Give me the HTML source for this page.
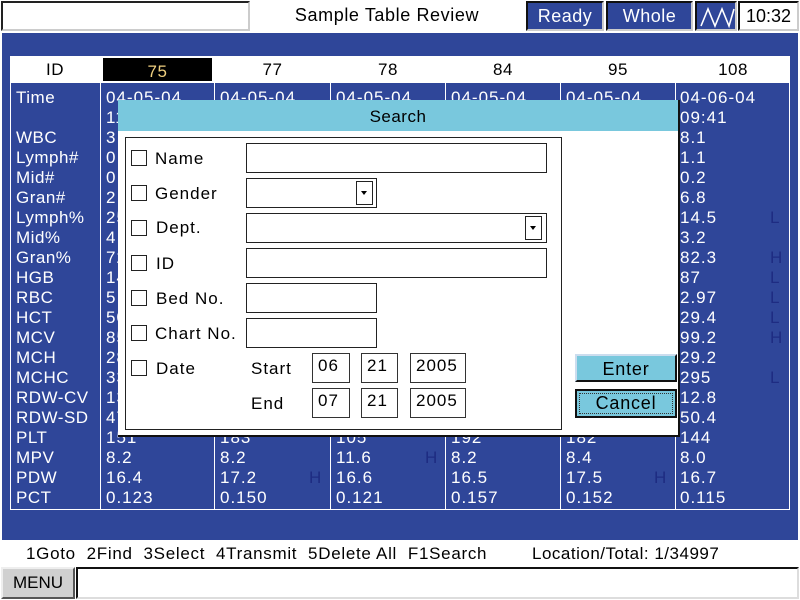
<!DOCTYPE html>
<html><head><meta charset="utf-8"><style>
*{margin:0;padding:0;box-sizing:border-box}
body{width:800px;height:600px;background:#fff;position:relative;overflow:hidden;font-family:"Liberation Sans",sans-serif;font-size:17px;color:#000}
.a{position:absolute}
.blue{background:#2f4699}
.col{position:absolute;top:88px;line-height:20px;color:#fff;font-size:17px;white-space:pre;letter-spacing:1px}
.flag{position:absolute;color:#1e2c82;font-size:17px;line-height:20px}
.vl{position:absolute;top:56px;width:1px;height:454px;background:#fff}
.hd{position:absolute;top:56px;height:27px;background:#fff;text-align:center;line-height:28px;font-size:17px;letter-spacing:0.5px}
.dlg{position:absolute;left:118px;top:100px;width:562px;height:337px;background:#fff;border-right:2px solid #111;border-bottom:2px solid #111}
.cb{position:absolute;width:16px;height:16px;border:1.5px solid #222;background:#fff}
.lb{position:absolute;font-size:17px;line-height:20px;letter-spacing:1px}
.in{position:absolute;border:1.5px solid #222;background:#fff}
.dd{position:absolute;width:17px;height:24px;border:1.5px solid #222;background:#fff}
.dd:after{content:"";position:absolute;left:4px;top:9px;border-left:3px solid transparent;border-right:3px solid transparent;border-top:4px solid #000}
.db{position:absolute;border:1.5px solid #333;background:#fff;font-size:17px;padding-left:5px;line-height:24px;letter-spacing:1px}
</style></head><body>
<div class="a" style="left:1px;top:1px;width:249px;height:30px;border:2px solid #222;border-right-color:#ccc;border-bottom-color:#ccc;background:#fff"></div>
<div class="a" style="left:250px;top:5px;width:274px;text-align:center;font-size:18px;letter-spacing:0.6px">Sample Table Review</div>
<div class="a blue" style="left:526px;top:1px;width:78px;height:30px;border:2px solid #111;border-right-color:#ccc;border-bottom-color:#ccc;color:#fff;text-align:center;line-height:26px;font-size:18px;letter-spacing:0.5px">Ready</div>
<div class="a blue" style="left:606px;top:1px;width:87px;height:30px;border:2px solid #111;border-right-color:#ccc;border-bottom-color:#ccc;color:#fff;text-align:center;line-height:26px;font-size:18px;letter-spacing:0.5px">Whole</div>
<div class="a blue" style="left:695px;top:1px;width:42px;height:30px;border:2px solid #111;border-right-color:#ccc;border-bottom-color:#ccc">
<svg width="38" height="26" style="position:absolute;left:1px;top:1px"><path d="M3 22 L10 5 L17 22 L24 5 L31 22 L36 5" fill="none" stroke="#fff" stroke-width="1.6"/></svg></div>
<div class="a" style="left:738px;top:1px;width:61px;height:30px;border:2px solid #111;border-right-color:#ccc;border-bottom-color:#ccc;background:#fff;text-align:center;line-height:27px;font-size:18px">10:32</div>
<div class="a blue" style="left:2px;top:33px;width:796px;height:507px"></div>
<div class="a" style="left:10px;top:56px;width:780px;height:454px;border:1px solid #fff"></div>
<div class="hd" style="left:10px;width:90px">ID</div>
<div class="hd" style="left:101px;width:113px;background:#000;color:#f0d080;border:2px solid #fff">75</div>
<div class="hd" style="left:215px;width:115px">77</div>
<div class="hd" style="left:331px;width:114px">78</div>
<div class="hd" style="left:446px;width:114px">84</div>
<div class="hd" style="left:561px;width:114px">95</div>
<div class="hd" style="left:676px;width:114px">108</div>
<div class="vl" style="left:100px"></div><div class="vl" style="left:214px"></div><div class="vl" style="left:330px"></div><div class="vl" style="left:445px"></div><div class="vl" style="left:560px"></div><div class="vl" style="left:675px"></div>
<div class="col" style="left:16px;letter-spacing:0.5px">Time

WBC
Lymph#
Mid#
Gran#
Lymph%
Mid%
Gran%
HGB
RBC
HCT
MCV
MCH
MCHC
RDW-CV
RDW-SD
PLT
MPV
PDW
PCT</div>
<div class="col" style="left:106px">04-05-04
11:20
3.5
0.9
0.3
2.3
25.1
4.2
72.7
140
5.01
50.2
85.1
28.0
330
13.2
47.2
151
8.2
16.4
0.123</div>
<div class="col" style="left:220px">04-05-04
11:22
5.1
1.2
0.4
3.5
20.1
6.2
70.1
135
4.50
44.0
90.0
30.0
310
12.5
48.0
183
8.2
17.2
0.150</div>
<div class="col" style="left:336px">04-05-04
















105
11.6
16.6
0.121</div>
<div class="col" style="left:451px">04-05-04
















192
8.2
16.5
0.157</div>
<div class="col" style="left:566px">04-05-04
















182
8.4
17.5
0.152</div>
<div class="col" style="left:680px">04-06-04
09:41
8.1
1.1
0.2
6.8
14.5
3.2
82.3
87
2.97
29.4
99.2
29.2
295
12.8
50.4
144
8.0
16.7
0.115</div>
<div class="flag" style="left:309px;top:468px">H</div>
<div class="flag" style="left:425px;top:448px">H</div>
<div class="flag" style="left:654px;top:468px">H</div>
<div class="flag" style="left:770px;top:208px">L</div>
<div class="flag" style="left:770px;top:248px">H</div>
<div class="flag" style="left:770px;top:268px">L</div>
<div class="flag" style="left:770px;top:288px">L</div>
<div class="flag" style="left:770px;top:308px">L</div>
<div class="flag" style="left:770px;top:328px">H</div>
<div class="flag" style="left:770px;top:368px">L</div>
<div class="dlg">
<div class="a" style="left:0;top:0;width:560px;height:31px;background:#79c8dd;text-align:center;line-height:33px;font-size:17px;letter-spacing:0.5px">Search</div>
<div class="a" style="left:7px;top:37px;width:437px;height:293px;border:1.5px solid #222"></div>
</div>
<div class="cb" style="left:131px;top:150px"></div><div class="lb" style="left:155px;top:149px">Name</div>
<div class="cb" style="left:131px;top:185px"></div><div class="lb" style="left:155px;top:184px">Gender</div>
<div class="cb" style="left:131px;top:220px"></div><div class="lb" style="left:156px;top:218px">Dept.</div>
<div class="cb" style="left:131px;top:255px"></div><div class="lb" style="left:156px;top:254px">ID</div>
<div class="cb" style="left:131px;top:290px"></div><div class="lb" style="left:156px;top:289px">Bed No.</div>
<div class="cb" style="left:131px;top:325px"></div><div class="lb" style="left:155px;top:324px">Chart No.</div>
<div class="cb" style="left:131px;top:360px"></div><div class="lb" style="left:156px;top:359px">Date</div>
<div class="in" style="left:246px;top:143px;width:301px;height:30px"></div>
<div class="in" style="left:246px;top:178px;width:131px;height:30px"></div><div class="dd" style="left:356px;top:181px"></div>
<div class="in" style="left:246px;top:213px;width:301px;height:30px"></div><div class="dd" style="left:525px;top:216px"></div>
<div class="in" style="left:246px;top:248px;width:301px;height:30px"></div>
<div class="in" style="left:246px;top:283px;width:131px;height:30px"></div>
<div class="in" style="left:246px;top:318px;width:131px;height:30px"></div>
<div class="lb" style="left:251px;top:359px">Start</div>
<div class="lb" style="left:251px;top:394px">End</div>
<div class="db" style="left:312px;top:353px;width:38px;height:30px">06</div>
<div class="db" style="left:361px;top:353px;width:37px;height:30px">21</div>
<div class="db" style="left:410px;top:353px;width:56px;height:30px">2005</div>
<div class="db" style="left:312px;top:388px;width:38px;height:30px">07</div>
<div class="db" style="left:361px;top:388px;width:37px;height:30px">21</div>
<div class="db" style="left:410px;top:388px;width:56px;height:30px">2005</div>
<div class="a" style="left:575px;top:354px;width:102px;height:28px;background:#79c8dd;border:2px solid #111;border-left-color:#cde;border-top-color:#cde;text-align:center;line-height:26px;font-size:18px;letter-spacing:0.8px">Enter</div>
<div class="a" style="left:575px;top:389px;width:102px;height:29px;background:#79c8dd;border:2px solid #111;text-align:center;line-height:25px;font-size:18px;letter-spacing:0.8px;outline:1px dotted #333;outline-offset:-5px">Cancel</div>
<div class="a" style="left:26px;top:544px;font-size:17px;white-space:pre;letter-spacing:0.7px">1Goto  2Find  3Select  4Transmit  5Delete All  F1Search</div>
<div class="a" style="left:532px;top:544px;font-size:17px;white-space:pre;letter-spacing:0.5px">Location/Total: 1/34997</div>
<div class="a" style="left:1px;top:567px;width:74px;height:32px;background:#d0d0d0;border:2px solid #eee;border-right-color:#555;border-bottom-color:#555;text-align:center;line-height:28px;font-size:17px">MENU</div>
<div class="a" style="left:76px;top:567px;width:723px;height:32px;border:2px solid #111;border-right-color:#ddd;border-bottom-color:#ddd;background:#fff"></div>
</body></html>
